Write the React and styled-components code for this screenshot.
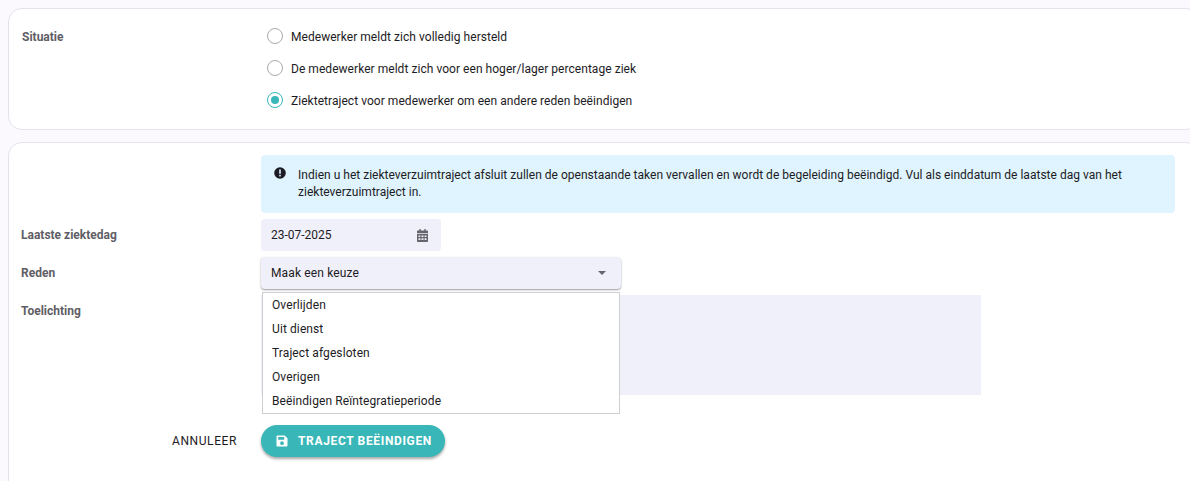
import React from "react";
import styled, { createGlobalStyle } from "styled-components";

const GlobalStyle = createGlobalStyle`
  html, body {
    margin: 0;
    padding: 0;
    height: 481px;
    overflow: hidden;
    background: #fbf9fe;
    font-family: Roboto, "Liberation Sans", sans-serif;
    color: #1d1b24;
  }
`;

const Page = styled.div`
  display: flex;
  flex-direction: column;
  gap: 12px;
  padding: 8px 0 0 8px;
  width: 1200px;
  box-sizing: border-box;
`;

const Card = styled.section`
  background: #fff;
  border: 1px solid #e4e3ec;
  border-radius: 14px;
  box-sizing: border-box;
`;

const SituationCard = styled(Card)`
  padding: 11px 12px 12px 13px;
  height: 122px;
`;

const FormCard = styled(Card)`
  padding: 12px 12px 24px;
  height: 360px;
  display: flex;
  flex-direction: column;
  gap: 6px;
`;

const Row = styled.div`
  display: grid;
  grid-template-columns: 240px 1fr;
  align-items: start;
  position: relative;
`;

const Label = styled.div`
  font-size: 12px;
  font-weight: 700;
  color: #5f5e66;
  line-height: ${(p) => p.$lineHeight || 32}px;
  height: 32px;
`;

const RadioList = styled.div`
  display: flex;
  flex-direction: column;
`;

const RadioRow = styled.label`
  display: flex;
  align-items: center;
  gap: 8px;
  height: 32px;
  padding-left: 5px;
  font-size: 12px;
  letter-spacing: 0.045px;
`;

const RadioText = styled.span`
  padding-top: 2px;
`;

const RadioCircle = styled.span`
  width: 16px;
  height: 16px;
  flex: none;
  box-sizing: border-box;
  border-radius: 50%;
  border: 1px solid ${(p) => (p.$checked ? "#38b6b8" : "#a9a8ae")};
  display: flex;
  align-items: center;
  justify-content: center;
  &::after {
    content: "";
    display: ${(p) => (p.$checked ? "block" : "none")};
    width: 8px;
    height: 8px;
    border-radius: 50%;
    background: #38b6b8;
  }
`;

const Alert = styled.div`
  display: flex;
  width: 914px;
  height: 58px;
  box-sizing: border-box;
  background: #dff4fe;
  border-radius: 4px;
  padding: 12px 12px 0 13px;
  gap: 12px;
  font-size: 12px;
  letter-spacing: 0.015px;
  line-height: 17px;
  color: #1d1b24;
`;

const AlertIcon = styled.svg`
  width: 12px;
  height: 12px;
  flex: none;
`;

const Field = styled.div`
  display: flex;
  align-items: center;
  justify-content: space-between;
  box-sizing: border-box;
  height: 32px;
  width: ${(p) => p.$width}px;
  background: #f0f0fa;
  border-radius: 4px;
  padding: 0 ${(p) => p.$paddingRight}px 0 10px;
  font-size: 12px;
  letter-spacing: ${(p) => p.$spacing || "normal"};
`;

const SelectField = styled(Field)`
  box-shadow: 0 1px 2px rgba(0, 0, 0, 0.4);
`;

const Caret = styled.span`
  width: 0;
  height: 0;
  border-left: 4px solid transparent;
  border-right: 4px solid transparent;
  border-top: 4px solid #66656d;
`;

const TextArea = styled.div`
  width: 720px;
  height: 100px;
  background: #f0f0fa;
`;

const Dropdown = styled.ul`
  position: absolute;
  top: -3px;
  left: 241px;
  width: 358px;
  margin: 0;
  padding: 0;
  box-sizing: border-box;
  background: #fff;
  border: 1px solid #cfced3;
  list-style: none;
  font-size: 12px;
  letter-spacing: 0.1px;
`;

const Option = styled.li`
  height: 24px;
  line-height: 24px;
  padding-left: 9px;
`;

const Actions = styled.div`
  display: grid;
  grid-template-columns: 240px 1fr;
  align-items: center;
  margin-top: 24px;
`;

const CancelButton = styled.button`
  border: 0;
  background: none;
  padding: 0 24px 0 0;
  text-align: right;
  font: 12px Roboto, sans-serif;
  letter-spacing: 0.6px;
  color: #1d1b24;
  height: 30px;
`;

const SubmitButton = styled.button`
  display: flex;
  align-items: center;
  gap: 10px;
  width: 184px;
  height: 32px;
  padding: 0 0 0 15px;
  border: 0;
  border-radius: 16px;
  background: #38b6b8;
  color: #fff;
  font: 700 12px Roboto, sans-serif;
  letter-spacing: 0.65px;
  white-space: nowrap;
  box-shadow: 0 2px 3px rgba(0, 0, 0, 0.35);
`;

const situations = [
  "Medewerker meldt zich volledig hersteld",
  "De medewerker meldt zich voor een hoger/lager percentage ziek",
  "Ziektetraject voor medewerker om een andere reden beëindigen",
];

const reasons = [
  "Overlijden",
  "Uit dienst",
  "Traject afgesloten",
  "Overigen",
  "Beëindigen Reïntegratieperiode",
];

const CalendarIcon = () => (
  <svg width="11" height="13" viewBox="0 0 11 13" fill="#66656d">
    <path d="M2.300 0h1.400v1.600h3.600V0h1.400v1.600h1.300c.6 0 1 .4 1 1v1.600H0V2.600c0-.6.4-1 1-1h1.300zM0 5h11v7c0 .6-.4 1-1 1H1c-.6 0-1-.4-1-1zm1.500 1.400v1.600h1.900V6.400zm3 0v1.600h2V6.400zm3.100 0v1.600h1.900V6.400zM1.500 9.200v1.900h1.900V9.200zm3 0v1.900h2V9.200zm3.100 0v1.900h1.900V9.200z" />
  </svg>
);

const SaveIcon = () => (
  <svg width="12" height="12" viewBox="0 0 12 12" fill="#fff">
    <path d="M1.500 .5h7.200l2.800 2.800v7.200c0 .6-.4 1-1 1h-9c-.6 0-1-.4-1-1v-9c0-.6.4-1 1-1zm.7 1.500v2.800h6V2zM6 6.300a1.900 1.900 0 1 0 0 3.800 1.900 1.900 0 0 0 0-3.800z" />
  </svg>
);

export default function App() {
  return (
    <Page>
      <GlobalStyle />
      <SituationCard>
        <Row>
          <Label $lineHeight={34}>Situatie</Label>
          <RadioList>
            {situations.map((text, index) => (
              <RadioRow key={text}>
                <RadioCircle $checked={index === 2} />
                <RadioText>{text}</RadioText>
              </RadioRow>
            ))}
          </RadioList>
        </Row>
      </SituationCard>
      <FormCard>
        <Row>
          <span />
          <Alert>
            <AlertIcon viewBox="0 0 12 12">
              <circle cx="6" cy="6" r="5.800" fill="#1d1b24" />
              <rect x="5.200" y="2.500" width="1.600" height="4.300" fill="#dff4fe" />
              <rect x="5.200" y="7.800" width="1.600" height="1.600" fill="#dff4fe" />
            </AlertIcon>
            <span>
              Indien u het ziekteverzuimtraject afsluit zullen de openstaande taken vervallen en wordt de begeleiding beëindigd. Vul als einddatum de laatste dag van het ziekteverzuimtraject in.
            </span>
          </Alert>
        </Row>
        <Row>
          <Label>Laatste ziektedag</Label>
          <Field $width={180} $paddingRight={13}>
            23-07-2025
            <CalendarIcon />
          </Field>
        </Row>
        <Row>
          <Label>Reden</Label>
          <SelectField $width={360} $paddingRight={15} $spacing="0.14px">
            Maak een keuze
            <Caret />
          </SelectField>
        </Row>
        <Row>
          <Label>Toelichting</Label>
          <TextArea />
          <Dropdown>
            {reasons.map((reason) => (
              <Option key={reason}>{reason}</Option>
            ))}
          </Dropdown>
        </Row>
        <Actions>
          <CancelButton>ANNULEER</CancelButton>
          <SubmitButton>
            <SaveIcon />
            TRAJECT BEËINDIGEN
          </SubmitButton>
        </Actions>
      </FormCard>
    </Page>
  );
}
